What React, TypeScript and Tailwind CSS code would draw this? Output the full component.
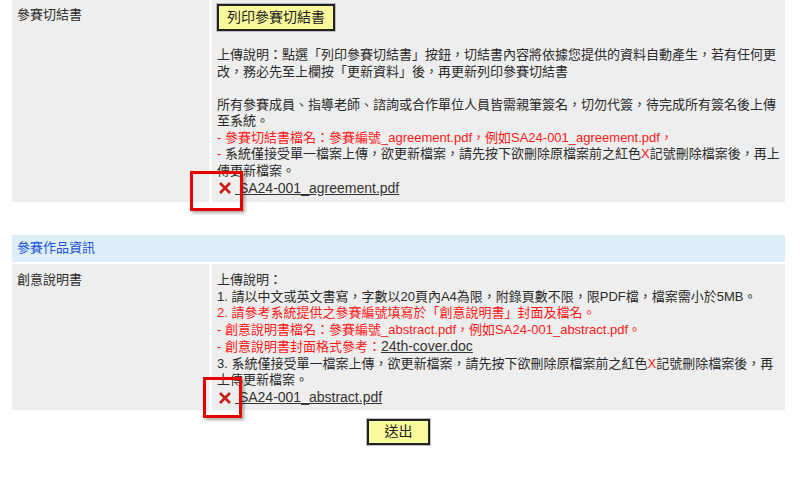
import type { ReactNode } from "react";

const FONT = "font-['Liberation_Sans','Noto_Sans_CJK_TC',sans-serif]";

function DeleteIcon({ box }: { box: string }) {
  return (
    <span className="relative inline-flex h-[16px] w-[16px] shrink-0 items-center justify-center">
      <svg viewBox="0 0 16 16" className="h-[16px] w-[16px]">
        <path d="M3 3 L13 13 M13 3 L3 13" stroke="#c81e1e" strokeWidth="2.7" strokeLinecap="butt" />
      </svg>
      {/* annotation frame drawn over the icon */}
      <span className={`pointer-events-none absolute border-[3px] border-[#e60000] shadow-[2px_2px_3px_rgba(0,0,0,0.35)] ${box}`} />
    </span>
  );
}

function FileRow({ name, box }: { name: string; box: string }) {
  return (
    <div className="flex h-[18px] items-center">
      <DeleteIcon box={box} />
      <a className="ml-[2px] text-[14px] text-[#333] underline">&nbsp;{name}</a>
    </div>
  );
}

function YellowButton({ children, className }: { children: ReactNode; className: string }) {
  return (
    <button
      className={`flex items-center justify-center border-2 border-[#222] bg-[#fafa9c] text-[14px] text-[#222] shadow-[0_0_0_1px_#bbb] ${className}`}
    >
      {children}
    </button>
  );
}

const Red = ({ children }: { children: ReactNode }) => <span className="text-[#ff1a1a]">{children}</span>;

export default function App() {
  return (
    <div className={`min-h-screen bg-white text-[13px] leading-[16.5px] text-[#2b2b2b] ${FONT}`}>
      <div className="ml-[12px] w-[773px]">
        {/* 參賽切結書 */}
        <div className="grid grid-cols-[197px_1fr] gap-x-[3px]">
          <div className="bg-[#eeeeee] px-[5px] pt-[7px]">參賽切結書</div>
          <div className="whitespace-nowrap bg-[#eeeeee] px-[5px] pt-[4px] pb-[5px]">
            <YellowButton className="h-[27px] w-[118px]">列印參賽切結書</YellowButton>
            <p className="mt-[16px]">
              上傳說明：點選「列印參賽切結書」按鈕，切結書內容將依據您提供的資料自動產生，若有任何更
              <br />
              改，務必先至上欄按「更新資料」後，再更新列印參賽切結書
              <br />
              <br />
              所有參賽成員、指導老師、諮詢或合作單位人員皆需親筆簽名，切勿代簽，待完成所有簽名後上傳
              <br />
              至系統。
              <br />
              <Red>- 參賽切結書檔名：參賽編號_agreement.pdf，例如SA24-001_agreement.pdf，</Red>
              <br />
              <Red>- </Red>系統僅接受單一檔案上傳，欲更新檔案，請先按下欲刪除原檔案前之紅色<Red>X</Red>記號刪除檔案後，再上
              <br />
              傳更新檔案。
            </p>
            <FileRow name="SA24-001_agreement.pdf" box="-left-[27px] -top-[9px] h-[40px] w-[53px]" />
          </div>
        </div>

        {/* 參賽作品資訊 */}
        <div className="mt-[33px] flex flex-col gap-y-[2px]">
          <div className="flex h-[27px] items-center bg-[#ddeef8] px-[5px] text-[#2052d4]">參賽作品資訊</div>
          <div className="grid grid-cols-[197px_1fr] gap-x-[3px]">
            <div className="bg-[#eeeeee] px-[5px] pt-[8px]">創意說明書</div>
            <div className="whitespace-nowrap bg-[#eeeeee] px-[5px] pt-[8px] pb-[3px]">
              <p>
                上傳說明：
                <br />
                1. 請以中文或英文書寫，字數以20頁內A4為限，附錄頁數不限，限PDF檔，檔案需小於5MB。
                <br />
                <Red>2. 請參考系統提供之參賽編號填寫於「創意說明書」封面及檔名。</Red>
                <br />
                <Red>- 創意說明書檔名：參賽編號_abstract.pdf，例如SA24-001_abstract.pdf。</Red>
                <br />
                <Red>- 創意說明書封面格式參考：</Red>
                <a className="text-[14px] text-[#333] underline">24th-cover.doc</a>
                <br />
                3. 系統僅接受單一檔案上傳，欲更新檔案，請先按下欲刪除原檔案前之紅色<Red>X</Red>記號刪除檔案後，再
                <br />
                上傳更新檔案。
              </p>
              <FileRow name="SA24-001_abstract.pdf" box="-left-[14px] -top-[13px] h-[41px] w-[39px]" />
            </div>
          </div>
        </div>

        <div className="mt-[9px] flex justify-center">
          <YellowButton className="h-[26px] w-[63px]">送出</YellowButton>
        </div>
      </div>
    </div>
  );
}
